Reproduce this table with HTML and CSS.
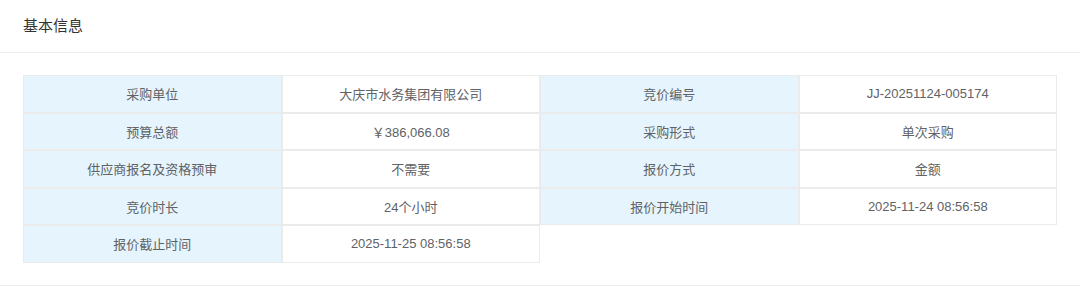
FILE: index.html
```html
<!DOCTYPE html>
<html lang="zh-CN">
<head>
<meta charset="utf-8">
<title>基本信息</title>
<link rel="stylesheet" href="styles.css">
</head>
<body>
<section class="panel">
  <div class="panel-header">基本信息</div>
  <div class="panel-body">
    <div class="info-grid">
      <div class="cell label">采购单位</div>
      <div class="cell value">大庆市水务集团有限公司</div>
      <div class="cell label">竞价编号</div>
      <div class="cell value">JJ-20251124-005174</div>

      <div class="cell label">预算总额</div>
      <div class="cell value">￥386,066.08</div>
      <div class="cell label">采购形式</div>
      <div class="cell value">单次采购</div>

      <div class="cell label">供应商报名及资格预审</div>
      <div class="cell value">不需要</div>
      <div class="cell label">报价方式</div>
      <div class="cell value">金额</div>

      <div class="cell label">竞价时长</div>
      <div class="cell value">24个小时</div>
      <div class="cell label">报价开始时间</div>
      <div class="cell value">2025-11-24 08:56:58</div>

      <div class="cell label">报价截止时间</div>
      <div class="cell value">2025-11-25 08:56:58</div>
    </div>
  </div>
</section>
</body>
</html>
```

FILE: styles.css
```css
* { box-sizing: border-box; }
html, body {
  margin: 0;
  padding: 0;
  background: #ffffff;
  font-family: "Liberation Sans", "Noto Sans CJK SC", sans-serif;
}
.panel {
  width: 1080px;
  border-bottom: 1px solid #ececec;
}
.panel-header {
  height: 53px;
  padding: 0 23px;
  display: flex;
  align-items: center;
  font-size: 15px;
  color: #333333;
  border-bottom: 1px solid #efefef;
  padding-bottom: 3px;
}
.panel-body {
  padding: 22px 23px 22px;
}
.info-grid {
  display: grid;
  grid-template-columns: repeat(4, 1fr);
}
.cell {
  height: 37.5px;
  border: 1px solid #ebebeb;
  display: flex;
  align-items: center;
  justify-content: center;
  font-size: 13px;
  color: #606266;
}
.label {
  background: #e6f5fd;
}
.value {
  background: #ffffff;
}
```
